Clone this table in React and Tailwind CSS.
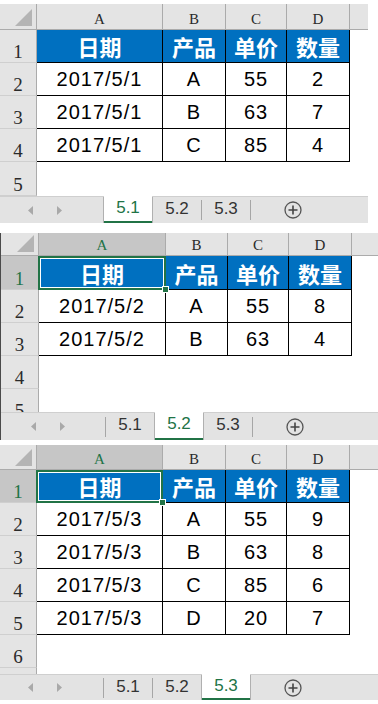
import React from 'react';

const HEAD = ['日期', '产品', '单价', '数量'];
const LETTERS = ['A', 'B', 'C', 'D'];
const TABS = ['5.1', '5.2', '5.3'];

const PANELS = [
  {
    wrap: 'w-[368px] mt-[4px]',
    colW: ['w-[37px]', 'w-[126px]', 'w-[63px]', 'w-[61px]', 'w-[63px]'],
    headH: 'h-[26px]',
    bodyH: 'h-[166px]',
    rows: ['h-[33px]', 'h-[33px]', 'h-[33px]', 'h-[33px]', 'h-[34px]'],
    labels: ['1', '2', '3', '4', '5'],
    tabH: 'h-[27px]',
    arrowW: 'w-[103px] pl-[28px]',
    data: [
      ['2017/5/1', 'A', '55', '2'],
      ['2017/5/1', 'B', '63', '7'],
      ['2017/5/1', 'C', '85', '4'],
    ],
    selected: false,
    active: 0,
  },
  {
    wrap: 'w-full mt-[10px] border-l border-[#4a4a4a]',
    colW: ['w-[38px]', 'w-[127px]', 'w-[62px]', 'w-[61px]', 'w-[63px]'],
    headH: 'h-[23px]',
    bodyH: 'h-[156px]',
    rows: ['h-[34px]', 'h-[33px]', 'h-[33px]', 'h-[33px]', 'h-[33px]'],
    labels: ['1', '2', '3', '4', '5'],
    tabH: 'h-[28px]',
    arrowW: 'w-[104px] pl-[30px]',
    data: [
      ['2017/5/2', 'A', '55', '8'],
      ['2017/5/2', 'B', '63', '4'],
    ],
    selected: true,
    active: 1,
  },
  {
    wrap: 'w-full mt-[5px]',
    colW: ['w-[37px]', 'w-[126px]', 'w-[63px]', 'w-[61px]', 'w-[63px]'],
    headH: 'h-[25px]',
    bodyH: 'h-[204px]',
    rows: ['h-[33px]', 'h-[33px]', 'h-[33px]', 'h-[33px]', 'h-[33px]', 'h-[33px]', 'h-[33px]'],
    labels: ['1', '2', '3', '4', '5', '6', ''],
    tabH: 'h-[26px]',
    arrowW: 'w-[103px] pl-[28px]',
    data: [
      ['2017/5/3', 'A', '55', '9'],
      ['2017/5/3', 'B', '63', '8'],
      ['2017/5/3', 'C', '85', '6'],
      ['2017/5/3', 'D', '20', '7'],
    ],
    selected: true,
    active: 2,
  },
];

function Corner({ w }) {
  return (
    <div className={`${w} h-full shrink-0 relative bg-[#e4e4e4] border-r border-b border-[#ababab]`}>
      <svg className="absolute right-[4px] bottom-[3px]" width="17" height="17" viewBox="0 0 17 17">
        <polygon points="17,0 17,17 0,17" fill="#b4b4b4" />
      </svg>
    </div>
  );
}

function TabBar({ p }) {
  const a = p.active;
  const boundary = (b) => {
    const adj = b === a || b === a + 1;
    if (adj) return <div key={'b' + b} className="w-px self-stretch bg-[#b0b0b0] shrink-0" />;
    return (
      <div key={'b' + b} className="w-px shrink-0 self-stretch flex items-center">
        <div className="w-px h-[20px] bg-[#a6a6a6]" />
      </div>
    );
  };
  const items = [];
  TABS.forEach((t, i) => {
    items.push(boundary(i));
    const on = i === a;
    items.push(
      <div
        key={t}
        className={
          on
            ? 'w-[48px] shrink-0 self-stretch bg-white flex justify-center pt-[3px] text-[17px] leading-none text-[#217346] border-b-2 border-[#217346] -mt-px relative'
            : 'w-[48px] shrink-0 self-stretch flex justify-center pt-[3px] text-[17px] leading-none text-[#333333]'
        }
      >
        {t}
      </div>
    );
  });
  items.push(boundary(3));
  return (
    <div className={`${p.tabH} flex bg-[#e3e3e3] border-t border-[#cfcfcf] font-['Liberation_Sans',Arial,sans-serif]`}>
      <div className={`${p.arrowW} shrink-0 flex items-center gap-[24px]`}>
        <svg width="5" height="9" viewBox="0 0 5 9">
          <path d="M5 0 L0 4.5 L5 9Z" fill="#a9a9a9" />
        </svg>
        <svg width="5" height="9" viewBox="0 0 5 9">
          <path d="M0 0 L5 4.5 L0 9Z" fill="#a9a9a9" />
        </svg>
      </div>
      {items}
      <div className="ml-[33px] flex items-center">
        <svg width="18" height="18" viewBox="0 0 18 18">
          <circle cx="9" cy="9" r="8" fill="none" stroke="#555555" strokeWidth="1.3" />
          <path d="M9 4.5 V13.5 M4.5 9 H13.5" stroke="#444444" strokeWidth="1.6" />
        </svg>
      </div>
    </div>
  );
}

function Panel({ p }) {
  const nTable = p.data.length + 1;
  return (
    <div className={`${p.wrap} flex flex-col`}>
      <div className={`${p.headH} flex bg-[#e4e4e4]`}>
        <Corner w={p.colW[0]} />
        {LETTERS.map((l, i) => {
          const sel = p.selected && i === 0;
          return (
            <div
              key={l}
              className={`${p.colW[i + 1]} shrink-0 h-full flex items-end justify-center pb-[2px] border-r border-b border-[#ababab] font-['Liberation_Serif','Times_New_Roman',serif] text-[15px] leading-none ${
                sel ? 'bg-[#c6c6c6] text-[#217346]' : 'text-[#2a2a2a]'
              }`}
            >
              {l}
            </div>
          );
        })}
        <div className="flex-1 h-full border-b border-[#ababab]" />
      </div>
      <div className={`${p.bodyH} overflow-hidden bg-white`}>
        {p.rows.map((h, r) => {
          const isTable = r < nTable;
          const selRow = p.selected && r === 0;
          return (
            <div key={r} className={`${h} flex shrink-0`}>
              <div
                className={`${p.colW[0]} shrink-0 h-full flex items-end justify-center pb-[1px] border-r border-r-[#ababab] border-b border-b-[#cfcfcf] font-['Liberation_Serif','Times_New_Roman',serif] text-[19px] leading-none ${
                  selRow ? 'bg-[#c6c6c6] text-[#217346]' : 'bg-[#e4e4e4] text-[#2a2a2a]'
                }`}
              >
                {p.labels[r]}
              </div>
              {isTable &&
                [0, 1, 2, 3].map((c) => {
                  const head = r === 0;
                  const txt = head ? HEAD[c] : p.data[r - 1][c];
                  return (
                    <div
                      key={c}
                      className={`${p.colW[c + 1]} shrink-0 h-full relative flex items-center justify-center border-r border-b border-black ${
                        head
                          ? "bg-[#0070c0] text-white font-bold text-[22px] font-['Noto_Sans_CJK_SC',sans-serif] leading-none"
                          : "text-black text-[20px] tracking-[1px] font-['Liberation_Sans',Arial,sans-serif] leading-none"
                      }`}
                    >
                      {txt}
                      {head && c === 0 && p.selected && (
                        <div className="absolute -left-px top-0 -right-px -bottom-px z-10 border-2 border-[#217346]">
                          <div className="absolute inset-0 border border-white" />
                          <div className="absolute -right-[5px] -bottom-[5px] w-[7px] h-[7px] bg-[#217346] border border-white" />
                        </div>
                      )}
                    </div>
                  );
                })}
            </div>
          );
        })}
      </div>
      <TabBar p={p} />
    </div>
  );
}

export default function App() {
  return (
    <div className="w-[378px] h-[704px] bg-white overflow-hidden flex flex-col">
      {PANELS.map((p, i) => (
        <Panel key={i} p={p} />
      ))}
    </div>
  );
}
